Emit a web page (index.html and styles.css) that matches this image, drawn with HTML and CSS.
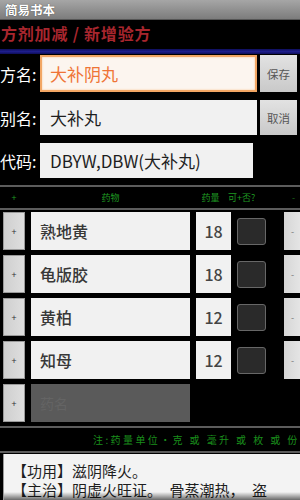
FILE: index.html
```html
<!DOCTYPE html>
<html>
<head>
<meta charset="utf-8">
<link rel="stylesheet" href="styles.css">
</head>
<body>
<div class="app">
  <div class="titlebar">简易书本</div>
  <div class="subtitle">方剂加减 / 新增验方</div>
  <div class="blueline"></div>

  <div class="form">
    <div class="frow r1">
      <div class="label">方名:</div>
      <div class="input focus">大补阴丸</div>
      <div class="btn">保存</div>
    </div>
    <div class="frow r2">
      <div class="label">别名:</div>
      <div class="input">大补丸</div>
      <div class="btn">取消</div>
    </div>
    <div class="frow r3">
      <div class="label">代码:</div>
      <div class="input wide">DBYW,DBW(大补丸)</div>
    </div>
  </div>

  <div class="sep s1"></div>
  <div class="grid header">
    <div class="h-plus">+</div>
    <div class="h-name">药物</div>
    <div class="h-amt">药量</div>
    <div class="h-chk">可+否?</div>
    <div class="h-minus">-</div>
  </div>
  <div class="sep"></div>

  <div class="drugs">
    <div class="grid drow">
      <div class="plus">+</div>
      <div class="name">熟地黄</div>
      <div class="amt">18</div>
      <div class="chk"></div>
      <div class="minus">-</div>
    </div>
    <div class="grid drow">
      <div class="plus">+</div>
      <div class="name">龟版胶</div>
      <div class="amt">18</div>
      <div class="chk"></div>
      <div class="minus">-</div>
    </div>
    <div class="grid drow">
      <div class="plus">+</div>
      <div class="name">黄柏</div>
      <div class="amt">12</div>
      <div class="chk"></div>
      <div class="minus">-</div>
    </div>
    <div class="grid drow">
      <div class="plus">+</div>
      <div class="name">知母</div>
      <div class="amt">12</div>
      <div class="chk"></div>
      <div class="minus">-</div>
    </div>
    <div class="grid drow">
      <div class="plus">+</div>
      <div class="name empty">药名</div>
    </div>
  </div>

  <div class="sep s3"></div>
  <div class="note">注:药量单位·克 或 毫升 或 枚 或 份</div>
  <div class="sep"></div>

  <div class="textbox">
    <div class="tline">【功用】滋阴降火。</div>
    <div class="tline">【主治】阴虚火旺证。&#12288;骨蒸潮热，&#12288;盗</div>
  </div>
</div>
</body>
</html>
```

FILE: styles.css
```css
html, body {
  margin: 0;
  padding: 0;
  background: #000;
  overflow: hidden;
}
body {
  width: 300px;
  height: 500px;
  font-family: "Noto Sans CJK SC", "Noto Sans", sans-serif;
}
.app {
  width: 300px;
  height: 500px;
  overflow: hidden;
  display: flex;
  flex-direction: column;
}
.titlebar {
  flex: none;
  height: 20px;
  line-height: 20px;
  padding-left: 5px;
  font-size: 12.5px;
  font-weight: bold;
  color: #fff;
  background: linear-gradient(#a6a6a6, #7c7c7c);
  text-shadow: 0 0 1px #333;
  border-bottom: 1px solid #555;
  box-sizing: border-box;
}
.subtitle {
  flex: none;
  height: 29px;
  line-height: 26px;
  padding-left: 1px;
  font-size: 16px;
  font-weight: bold;
  letter-spacing: 0.8px;
  color: #a8262e;
  white-space: nowrap;
}
.blueline {
  flex: none;
  height: 5px;
  background: linear-gradient(#0e0e5a, #1e1e8c, #0e0e5a);
}
.form {
  flex: none;
  display: flex;
  flex-direction: column;
  gap: 8px;
  padding-top: 1px;
}
.frow {
  display: flex;
  align-items: stretch;
}
.r1 { height: 37px; }
.r2, .r3 { height: 35px; }
.label {
  width: 40px;
  flex: none;
  color: #fff;
  font-size: 16px;
  display: flex;
  align-items: center;
  white-space: nowrap;
}
.input {
  width: 217px;
  flex: none;
  box-sizing: border-box;
  background: #f1f1f1;
  color: #1e1e1e;
  font-size: 17px;
  padding-left: 10px;
  display: flex;
  align-items: center;
  white-space: nowrap;
  overflow: hidden;
}
.input.focus {
  background: #fcf5ef;
  border: 2px solid #f2a664;
  box-shadow: inset 0 0 2px #f7c08a;
  color: #ef7436;
  padding-left: 8px;
}
.input.wide {
  width: 213px;
}
.btn {
  width: 37px;
  flex: none;
  margin-left: 3px;
  background: linear-gradient(#e2e2e2, #c9c9c9);
  color: #565656;
  font-size: 11.5px;
  display: flex;
  align-items: center;
  justify-content: center;
}
.sep {
  flex: none;
  height: 2px;
  background: #5c5c5c;
}
.s1 { margin-top: 7px; }
.grid {
  display: grid;
  grid-template-columns: 22px 159px 35px 29px 30px;
  column-gap: 6px;
  padding-left: 3px;
}
.header {
  flex: none;
  height: 21px;
  line-height: 21px;
  font-size: 9px;
  color: #1f9a22;
  white-space: nowrap;
}
.h-plus, .h-name, .h-amt { text-align: center; }
.h-amt { margin-left: -6px; }
.h-chk { margin-left: -9px; }
.h-minus { margin-left: 20px; color: #1a6a1a; }
.drugs {
  flex: none;
  display: flex;
  flex-direction: column;
  gap: 5px;
  padding-top: 2px;
}
.drow {
  height: 38px;
}
.plus {
  background: linear-gradient(90deg, #cfcfcf, #dedede);
  border: 1px solid #9a9a9a;
  box-sizing: border-box;
  color: #333;
  font-size: 9px;
  display: flex;
  align-items: center;
  justify-content: center;
}
.name {
  background: #f1f1f1;
  color: #383838;
  font-size: 16px;
  font-weight: 500;
  padding-left: 9px;
  display: flex;
  align-items: center;
}
.name.empty {
  background: #5a5a5a;
  color: #646464;
  font-size: 14px;
  font-weight: normal;
}
.amt {
  background: #f1f1f1;
  color: #444;
  font-size: 16px;
  font-weight: 500;
  display: flex;
  align-items: center;
  justify-content: center;
}
.chk {
  align-self: center;
  height: 27px;
  box-sizing: border-box;
  background: #2a2a2a;
  border: 1px solid #676767;
  border-radius: 3px;
}
.minus {
  margin-left: 12px;
  background: linear-gradient(90deg, #d6d6d6, #e6e6e6);
  color: #777;
  font-size: 9px;
  display: flex;
  align-items: center;
  padding-left: 7px;
}
.s3 { margin-top: 4px; }
.note {
  flex: none;
  height: 23px;
  line-height: 23px;
  padding-left: 93px;
  font-size: 10px;
  letter-spacing: 2.4px;
  color: #1a8e1c;
  white-space: nowrap;
  overflow: hidden;
}
.textbox {
  flex: none;
  position: relative;
  margin-top: 1px;
  margin-left: 3px;
  height: 50px;
  background: #f3f3f3;
  border-left: 1px solid #9a9a9a;
  padding-top: 7px;
  padding-left: 8px;
  box-sizing: border-box;
  overflow: hidden;
}
.textbox::after {
  content: "";
  position: absolute;
  left: 0;
  right: 0;
  bottom: 0;
  height: 12px;
  background: linear-gradient(rgba(0,0,0,0), rgba(0,0,0,0.85));
}
.tline {
  font-size: 15px;
  line-height: 19px;
  color: #1e1e1e;
  white-space: nowrap;
}
```
